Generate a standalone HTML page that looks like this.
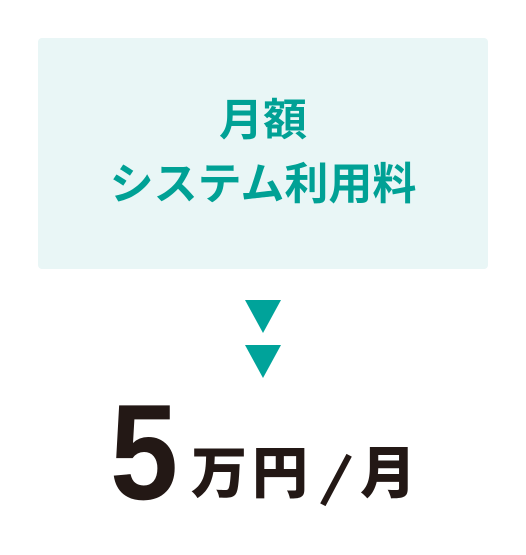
<!DOCTYPE html>
<html><head><meta charset="utf-8"><style>
body{margin:0;width:526px;height:555px;background:#fff;position:relative;overflow:hidden}
.box{position:absolute;left:38px;top:38px;width:450px;height:231px;background:#e9f6f6;border-radius:4px}
.t{position:absolute;left:0;width:526px;text-align:center;color:#00a195;font:bold 44px/1 "Noto Sans CJK JP",sans-serif;white-space:nowrap}
.tri{position:absolute;left:245px;width:0;height:0;border-left:18px solid transparent;border-right:18px solid transparent;border-top:33px solid #00a39a}
.g{position:absolute;color:#231815;white-space:nowrap;line-height:1}
.j{font:900 56px/1 "Noto Sans CJK JP",sans-serif}
</style></head><body>
<div class="box"></div>
<div class="t" style="top:94px">月額</div>
<div class="t" style="top:158px">システム利用料</div>
<div class="tri" style="top:300px"></div>
<div class="tri" style="top:345px"></div>
<div class="g" style="left:110px;top:384px;font:bold 136px/1 'Liberation Sans',sans-serif;transform:scaleX(0.9);transform-origin:left top">5</div>
<div class="g j" style="left:191px;top:442px">万</div>
<div class="g j" style="left:252px;top:442px">円</div>
<div style="position:absolute;left:333px;top:452px;width:6px;height:56px;background:#231815;transform:rotate(28deg)"></div>
<div class="g j" style="left:360px;top:442px">月</div>
</body></html>
